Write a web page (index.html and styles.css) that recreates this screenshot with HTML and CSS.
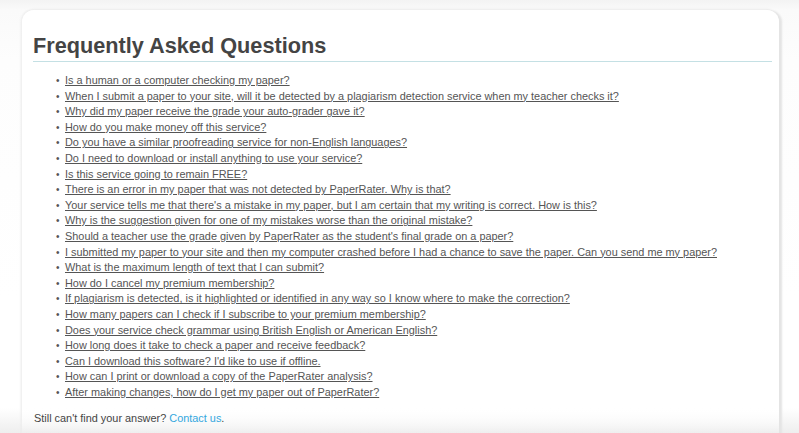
FILE: index.html
```html
<!DOCTYPE html>
<html>
<head>
<meta charset="utf-8">
<link rel="stylesheet" href="styles.css">
</head>
<body>
<div class="page">
  <div class="card">
    <h1 class="title">Frequently Asked Questions</h1>
    <ul class="faq">
      <li><a href="#">Is a human or a computer checking my paper?</a></li>
      <li><a href="#">When I submit a paper to your site, will it be detected by a plagiarism detection service when my teacher checks it?</a></li>
      <li><a href="#">Why did my paper receive the grade your auto-grader gave it?</a></li>
      <li><a href="#">How do you make money off this service?</a></li>
      <li><a href="#">Do you have a similar proofreading service for non-English languages?</a></li>
      <li><a href="#">Do I need to download or install anything to use your service?</a></li>
      <li><a href="#">Is this service going to remain FREE?</a></li>
      <li><a href="#">There is an error in my paper that was not detected by PaperRater. Why is that?</a></li>
      <li><a href="#">Your service tells me that there's a mistake in my paper, but I am certain that my writing is correct. How is this?</a></li>
      <li><a href="#">Why is the suggestion given for one of my mistakes worse than the original mistake?</a></li>
      <li><a href="#">Should a teacher use the grade given by PaperRater as the student's final grade on a paper?</a></li>
      <li><a href="#">I submitted my paper to your site and then my computer crashed before I had a chance to save the paper. Can you send me my paper?</a></li>
      <li><a href="#">What is the maximum length of text that I can submit?</a></li>
      <li><a href="#">How do I cancel my premium membership?</a></li>
      <li><a href="#">If plagiarism is detected, is it highlighted or identified in any way so I know where to make the correction?</a></li>
      <li><a href="#">How many papers can I check if I subscribe to your premium membership?</a></li>
      <li><a href="#">Does your service check grammar using British English or American English?</a></li>
      <li><a href="#">How long does it take to check a paper and receive feedback?</a></li>
      <li><a href="#">Can I download this software? I'd like to use if offline.</a></li>
      <li><a href="#">How can I print or download a copy of the PaperRater analysis?</a></li>
      <li><a href="#">After making changes, how do I get my paper out of PaperRater?</a></li>
    </ul>
    <p class="more">Still can't find your answer? <a class="contact" href="#">Contact us</a>.</p>
  </div>
</div>
</body>
</html>
```
FILE: styles.css
```css
html, body {
  margin: 0;
  padding: 0;
  height: 100%;
}
body {
  font-family: "Liberation Sans", Arial, sans-serif;
  background: linear-gradient(to bottom, #f3f3f3 0, #fafafa 10px, #fdfdfd 60px, #ffffff 300px, #ffffff 408px, #eeeeee 433px);
  overflow: hidden;
}
.page {
  padding: 10px 0 0 22px;
}
.card {
  width: 757px;
  height: 440px;
  box-sizing: border-box;
  padding: 21px 7px 0 11px;
  border-radius: 12px 12px 0 0;
  background: linear-gradient(to bottom, #ffffff 0, #ffffff 396px, rgba(255,255,255,0) 424px);
  box-shadow: 4px 0 2px -1px #e4e4e4, -2px 0 3px -1px #ececec, 0 -1px 2px #ececec;
}
.title {
  margin: 0;
  font-size: 21.7px;
  line-height: 29px;
  font-weight: bold;
  color: #444444;
  border-bottom: 1px solid #c4e0e4;
  padding-bottom: 1px;
}
.faq {
  margin: 11px 0 0 0;
  padding: 0 0 0 32px;
  list-style: disc;
  color: #555555;
  font-size: 10.9px;
  line-height: 15.6px;
}
.faq li::marker {
  content: "\2022\00a0\00a0";
  font-size: 10px;
}
.faq a {
  color: #555555;
  text-decoration: underline;
}
.more {
  margin: 11px 0 0 1px;
  font-size: 10.9px;
  line-height: 15px;
  color: #444444;
}
.contact {
  color: #33a7de;
  text-decoration: none;
}
```
